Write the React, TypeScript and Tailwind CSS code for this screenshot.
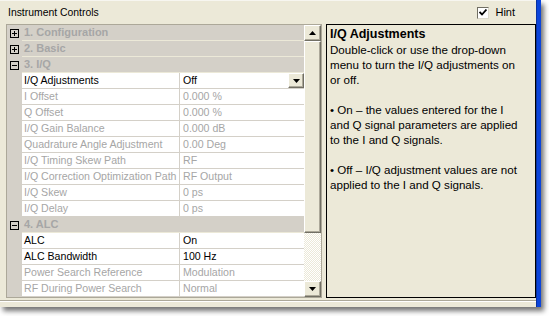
import React from 'react';

type Row =
  | { kind: 'cat'; label: string; open: boolean }
  | { kind: 'prop'; name: string; value: string; enabled?: boolean; dropdown?: boolean };

// property grid contents, top to bottom
const ROWS: Row[] = [
  { kind: 'cat', label: '1. Configuration', open: false },
  { kind: 'cat', label: '2. Basic', open: false },
  { kind: 'cat', label: '3. I/Q', open: true },
  { kind: 'prop', name: 'I/Q Adjustments', value: 'Off', enabled: true, dropdown: true },
  { kind: 'prop', name: 'I Offset', value: '0.000 %' },
  { kind: 'prop', name: 'Q Offset', value: '0.000 %' },
  { kind: 'prop', name: 'I/Q Gain Balance', value: '0.000 dB' },
  { kind: 'prop', name: 'Quadrature Angle Adjustment', value: '0.00 Deg' },
  { kind: 'prop', name: 'I/Q Timing Skew Path', value: 'RF' },
  { kind: 'prop', name: 'I/Q Correction Optimization Path', value: 'RF Output' },
  { kind: 'prop', name: 'I/Q Skew', value: '0 ps' },
  { kind: 'prop', name: 'I/Q Delay', value: '0 ps' },
  { kind: 'cat', label: '4. ALC', open: true },
  { kind: 'prop', name: 'ALC', value: 'On', enabled: true },
  { kind: 'prop', name: 'ALC Bandwidth', value: '100 Hz', enabled: true },
  { kind: 'prop', name: 'Power Search Reference', value: 'Modulation' },
  { kind: 'prop', name: 'RF During Power Search', value: 'Normal' },
];

const Expander = ({ open }: { open: boolean }) => (
  <div className="relative ml-[3px] h-[9px] w-[9px] border border-black">
    <div className="absolute left-[1px] right-[1px] top-[3px] h-px bg-black" />
    {!open && <div className="absolute bottom-[1px] top-[1px] left-[3px] w-px bg-black" />}
  </div>
);

const Arrow = ({ down }: { down?: boolean }) => (
  <svg width="7" height="4" viewBox="0 0 7 4">
    {down ? <polygon points="0,0 7,0 3.5,4" fill="#000" /> : <polygon points="0,4 7,4 3.5,0" fill="#000" />}
  </svg>
);

const RaisedBox = ({ className, children }: { className?: string; children?: React.ReactNode }) => (
  <div
    className={`flex items-center justify-center border border-b-[#716F64] border-l-white border-r-[#716F64] border-t-white bg-[#ECE9D8] shadow-[inset_-1px_-1px_0_#ACA899] ${className ?? ''}`}
  >
    {children}
  </div>
);

const GridRow = ({ row }: { row: Row }) => {
  if (row.kind === 'cat') {
    return (
      <div className="flex h-4 bg-[#D4D0C8]">
        <div className="flex w-[15px] items-center">
          <Expander open={row.open} />
        </div>
        <div className="flex-1 border-b border-[#ECE9D8] pl-[2px] text-[11px] font-bold leading-[15px] text-[#A6A6A6]">
          {row.label}
        </div>
      </div>
    );
  }
  const color = row.enabled ? 'text-black' : 'text-[#A6A6A6]';
  return (
    <div className="flex h-4">
      <div className="w-[15px] bg-[#D4D0C8]" />
      <div className={`w-[158px] whitespace-nowrap border-b border-r border-[#D4D0C8] bg-white pl-[2px] text-[10.6px] leading-[15px] ${color}`}>
        {row.name}
      </div>
      <div className={`relative flex-1 whitespace-nowrap border-b border-[#D4D0C8] bg-white pl-[3px] text-[10.6px] leading-[15px] ${color}`}>
        {row.value}
        {row.dropdown && (
          <RaisedBox className="absolute right-0 top-0 h-[15px] w-[16px]">
            <Arrow down />
          </RaisedBox>
        )}
      </div>
    </div>
  );
};

const Scrollbar = () => (
  <div className="flex w-[17px] flex-col">
    <RaisedBox className="h-4">
      <Arrow />
    </RaisedBox>
    <RaisedBox className="h-[192px]" />
    <div className="flex-1 bg-[image:repeating-conic-gradient(#ffffff_0%_25%,#ece9d8_0%_50%)] bg-[length:2px_2px]" />
    <RaisedBox className="h-4">
      <Arrow down />
    </RaisedBox>
  </div>
);

const HINT = [
  'Double-click or use the drop-down',
  'menu to turn the I/Q adjustments on',
  'or off.',
  '',
  '\u2022 On \u2013 the values entered for the I',
  'and Q signal parameters are applied',
  'to the I and Q signals.',
  '',
  '\u2022 Off \u2013 I/Q adjustment values are not',
  'applied to the I and Q signals.',
];

export default function App() {
  return (
    <div className="relative h-[316px] w-[549px] overflow-hidden bg-white font-['Liberation_Sans',Arial,sans-serif]">
      <div className="flex h-[307px] w-[541px] shadow-[3px_4px_5px_rgba(0,0,0,0.55)]">
        <div className="flex flex-1 flex-col border-t border-[#F7F6F0] bg-[#ECE9D8]">
          {/* title bar */}
          <div className="flex h-[23px] items-center pl-2 pr-[21px]">
            <span className="text-[10.4px] text-black">Instrument Controls</span>
            <div className="ml-auto flex items-center gap-[6px]">
              <div className="flex h-[12px] w-[12px] items-center justify-center border border-b-[#DCD9CC] border-l-[#716F64] border-r-[#DCD9CC] border-t-[#716F64] bg-white">
                <svg width="8" height="7" viewBox="0 0 8 7">
                  <polyline points="0.5,3 3,5.5 7.5,0.5" fill="none" stroke="#000" strokeWidth="1.8" />
                </svg>
              </div>
              <span className="text-[11px] text-black">Hint</span>
            </div>
          </div>

          <div className="flex h-[274px] pl-[6px]">
            {/* property grid */}
            <div className="flex w-[316px] border border-[#ACA899]">
              <div className="flex w-[297px] flex-col">
                {ROWS.map((row, i) => (
                  <GridRow key={i} row={row} />
                ))}
              </div>
              <Scrollbar />
            </div>

            {/* hint panel */}
            <div className="ml-[4px] flex-1 border border-black px-[3px] pt-[2px]">
              <div className="text-[12.5px] font-bold leading-[15px] text-black">I/Q Adjustments</div>
              {HINT.map((line, i) => (
                <div key={i} className="h-[15px] whitespace-nowrap text-[11.6px] leading-[15px] text-black">
                  {line}
                </div>
              ))}
            </div>
          </div>

          <div className="mt-[2px] h-[2px] border-t border-b border-b-white border-t-[#ACA899]" />
        </div>
        <div className="w-[5px] border-l border-[#0831A0] bg-[#0B44DA]" />
      </div>
    </div>
  );
}
